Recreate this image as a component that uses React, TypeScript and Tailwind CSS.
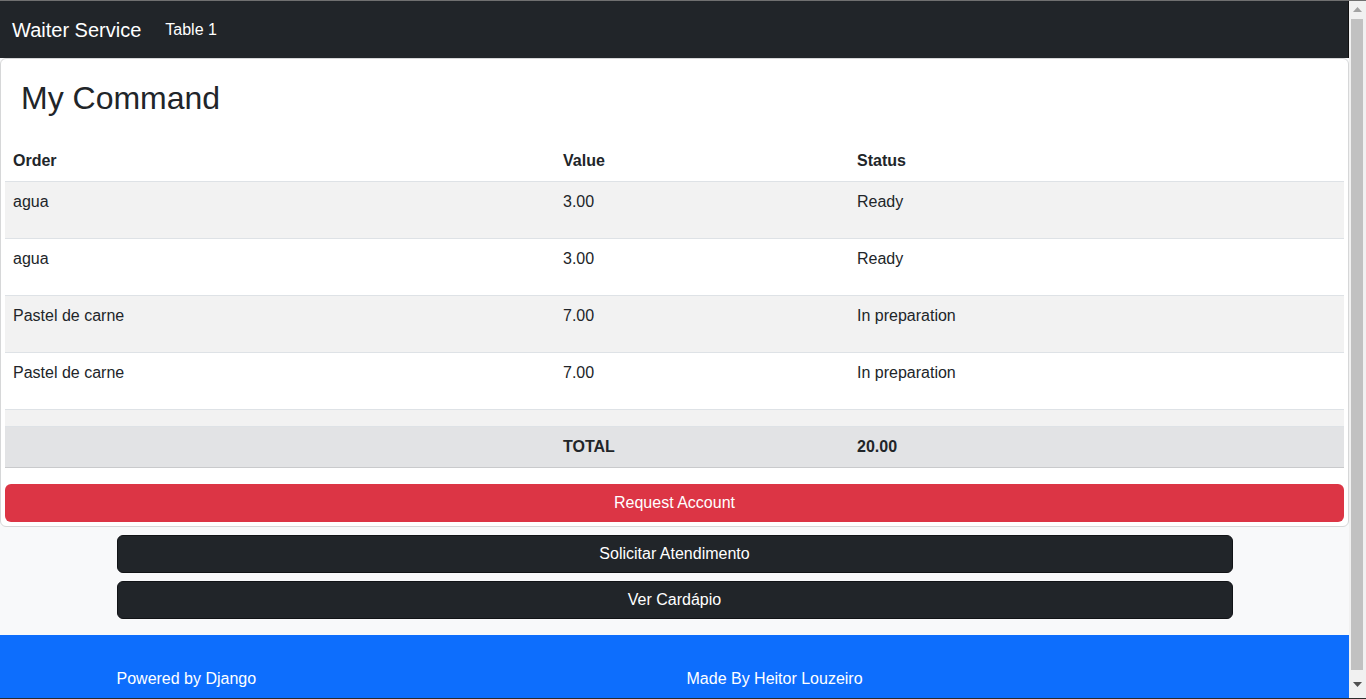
import React from 'react';

type Item = { order: string; value: string; status: string };

const items: Item[] = [
  { order: 'agua', value: '3.00', status: 'Ready' },
  { order: 'agua', value: '3.00', status: 'Ready' },
  { order: 'Pastel de carne', value: '7.00', status: 'In preparation' },
  { order: 'Pastel de carne', value: '7.00', status: 'In preparation' },
];

const cols = 'grid grid-cols-[550px_294px_1fr]';

function Scrollbar() {
  return (
    <div className="w-[17px] bg-[#f1f1f1] flex flex-col">
      <div className="h-[17px] flex items-center justify-center">
        <svg width="9" height="5" viewBox="0 0 9 5">
          <polygon points="0,5 9,5 4.5,0" fill="#a3a3a3" />
        </svg>
      </div>
      <div className="h-px" />
      <div className="mx-[2px] w-[12px] h-[651px] bg-[#c1c1c1]" />
      <div className="flex-1 flex items-center justify-center">
        <svg width="9" height="5" viewBox="0 0 9 5">
          <polygon points="0,0 9,0 4.5,5" fill="#505050" />
        </svg>
      </div>
    </div>
  );
}

export default function App() {
  return (
    <div
      className="w-[1366px] h-[699px] overflow-hidden flex flex-col text-[#212529] text-[16px]"
      style={{ fontFamily: '"Liberation Sans", Arial, sans-serif' }}
    >
      <div className="h-px bg-[#707070]" />
      <div className="flex-1 flex min-h-0">
        <div className="w-[1349px] bg-[#f8f9fa] flex flex-col overflow-hidden">
          {/* Navbar */}
          <nav className="h-[57px] shrink-0 bg-[#212529] flex items-center pl-3 pt-px border-r border-[#111]">
            <span className="text-white text-[20px] leading-[30px] mr-4">Waiter Service</span>
            <span className="text-white px-2 leading-6">Table 1</span>
          </nav>

          {/* Card */}
          <div className="bg-white border border-[#d6d7d8] rounded-md p-1 shrink-0">
            <div className="pl-4 pt-4 pb-6">
              <h2 className="text-[32px] leading-[38px] font-normal">My Command</h2>
            </div>
            <div className="mb-4">
              <div className={`${cols} h-[41px] border-b border-[#dee2e6] font-bold`}>
                <div className="px-2 py-2 leading-6">Order</div>
                <div className="px-2 py-2 leading-6">Value</div>
                <div className="px-2 py-2 leading-6">Status</div>
              </div>
              {items.map((it, i) => (
                <div
                  key={i}
                  className={`${cols} h-[57px] border-b border-[#dee2e6] ${i % 2 === 0 ? 'bg-[#f2f2f2]' : 'bg-white'}`}
                >
                  <div className="px-2 pt-2 leading-6">{it.order}</div>
                  <div className="px-2 pt-2 leading-6">{it.value}</div>
                  <div className="px-2 pt-2 leading-6">{it.status}</div>
                </div>
              ))}
              <div className="h-[17px] bg-[#f2f2f2] border-b border-[#dee2e6]" />
              <div className={`${cols} h-[41px] bg-[#e2e3e5] border-b border-[#c9cacc] font-bold`}>
                <div />
                <div className="px-2 pt-2 leading-6">TOTAL</div>
                <div className="px-2 pt-2 leading-6">20.00</div>
              </div>
            </div>
            <button className="w-full h-[38px] rounded-md bg-[#dc3545] text-white leading-6">
              Request Account
            </button>
          </div>

          {/* Actions */}
          <div className="w-[1140px] mx-auto px-3 pt-2 flex flex-col gap-2 shrink-0">
            <button className="h-[38px] rounded-md bg-[#212529] border border-[#111316] text-white leading-6">
              Solicitar Atendimento
            </button>
            <button className="h-[38px] rounded-md bg-[#212529] border border-[#111316] text-white leading-6">
              Ver Cardápio
            </button>
          </div>

          {/* Footer */}
          <footer className="mt-4 flex-1 bg-[#0d6efd] text-white">
            <div className="w-[1140px] mx-auto grid grid-cols-2 pt-8">
              <div className="px-3 leading-6">Powered by Django</div>
              <div className="px-3 leading-6">Made By Heitor Louzeiro</div>
            </div>
          </footer>
        </div>
        <Scrollbar />
      </div>
      <div className="h-px bg-[#2b2b2b]" />
    </div>
  );
}
